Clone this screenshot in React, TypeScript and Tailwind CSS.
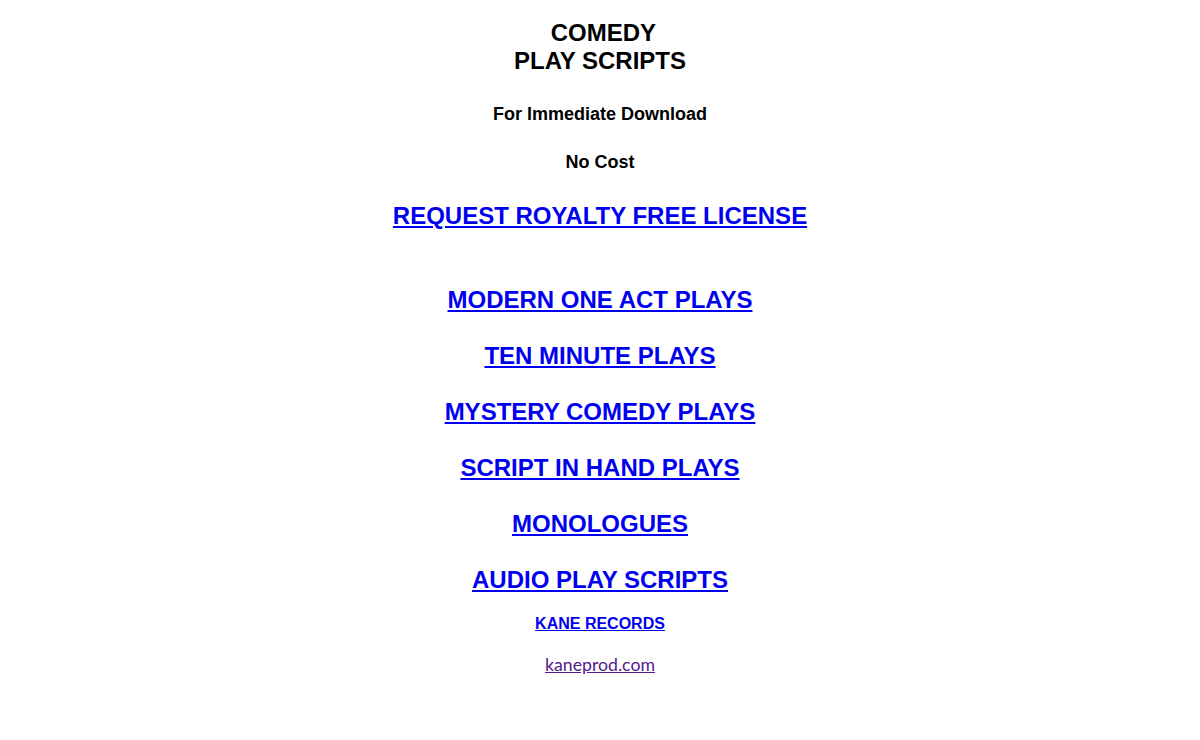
// Comedy play scripts landing page
const links = [
  'MODERN ONE ACT PLAYS',
  'TEN MINUTE PLAYS',
  'MYSTERY COMEDY PLAYS',
  'SCRIPT IN HAND PLAYS',
  'MONOLOGUES',
  'AUDIO PLAY SCRIPTS',
];

export default function App() {
  return (
    <div className="min-h-[740px] w-full bg-white font-['Liberation_Sans',Arial,sans-serif] text-black">
      <div className="flex flex-col items-center pt-[19px] text-center">
        <h1 className="text-[24px] leading-[28px] font-bold">
          {'\u00a0'}COMEDY
          <br />
          PLAY SCRIPTS
        </h1>

        <p className="mt-[29px] text-[18px] leading-[21px] font-bold">For Immediate Download</p>
        <p className="mt-[27px] text-[18px] leading-[21px] font-bold">No Cost</p>

        <a href="#" className="mt-[29px] text-[24px] leading-[28px] font-bold text-[#0000ee] underline">
          REQUEST ROYALTY FREE LICENSE
        </a>

        <nav className="mt-[56px] flex flex-col items-center gap-[28px]">
          {links.map((label) => (
            <a key={label} href="#" className="text-[24px] leading-[28px] font-bold text-[#0000ee] underline">
              {label}
            </a>
          ))}
        </nav>

        <a href="#" className="mt-[21px] text-[16px] leading-[18px] font-bold text-[#0000ee] underline">
          KANE RECORDS
        </a>

        <a
          href="#"
          className="mt-[21px] font-['Lato',Calibri,sans-serif] text-[17.7px] leading-[22px] text-[#551a8b] underline"
        >
          kaneprod.com
        </a>
      </div>
    </div>
  );
}
